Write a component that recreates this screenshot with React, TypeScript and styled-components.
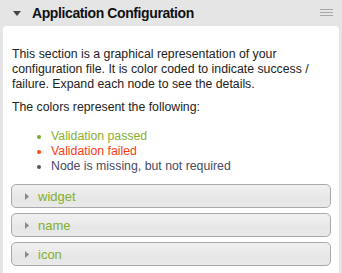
import React from "react";
import styled, { createGlobalStyle } from "styled-components";

const Global = createGlobalStyle`
  html, body { margin: 0; padding: 0; background: #e5e5e5; }
  body { font-family: "Liberation Sans", Arial, sans-serif; }
`;

const Page = styled.div`
  width: 342px;
  height: 273px;
  background: #e5e5e5;
  display: flex;
  flex-direction: column;
  overflow: hidden;
`;

const Header = styled.div`
  height: 26px;
  flex-shrink: 0;
  display: flex;
  align-items: center;
  padding: 0 9px 0 13px;
  box-sizing: border-box;
`;

const Title = styled.div`
  flex: 1;
  margin-left: 11px;
  font-size: 14px;
  letter-spacing: -0.4px;
  font-weight: bold;
  color: #111;
  padding-bottom: 1px;
`;

const Panel = styled.div`
  flex: 1;
  margin: 0 3px;
  background: #fff;
  border-radius: 4px 4px 0 0;
  padding: 21px 9px 0 9px;
  box-sizing: border-box;
`;

const Para = styled.p<{ $mb: number }>`
  margin: 0 0 ${(p) => p.$mb}px 0;
  font-size: 12.3px;
  line-height: 14.8px;
  color: #222;
`;

const List = styled.ul`
  margin: 0 0 10px 0;
  padding: 0 0 0 25px;
  list-style: none;
`;

const Item = styled.li<{ $c: string; $dot: string }>`
  font-size: 12.3px;
  line-height: 15px;
  color: ${(p) => p.$c};
  display: flex;
  align-items: center;
  &::before {
    content: "";
    width: 4px;
    height: 4px;
    border-radius: 50%;
    background: ${(p) => p.$dot};
    margin-right: 10px;
  }
`;

const Rows = styled.div`
  display: flex;
  flex-direction: column;
  gap: 5px;
  margin-left: -1px;
  margin-right: -1px;
`;

const Row = styled.div`
  height: 24px;
  box-sizing: border-box;
  border: 1px solid #a9a9a9;
  border-radius: 5px;
  background: linear-gradient(#f0f0f0 0%, #ebebeb 40%, #e6e6e6 60%, #e9e9e9 100%);
  display: flex;
  align-items: center;
  padding-left: 13px;
  font-size: 13px;
  color: #84b02a;
`;

const Arrow = styled.svg`
  margin-right: 9px;
`;

const Menu = () => (
  <svg width="13" height="8" viewBox="0 0 13 8">
    <rect x="0" y="0" width="13" height="1" fill="#a8a8a8" />
    <rect x="0" y="3" width="13" height="1" fill="#a8a8a8" />
    <rect x="0" y="6" width="13" height="1" fill="#a8a8a8" />
  </svg>
);

export default function App() {
  return (
    <Page>
      <Global />
      <Header>
        <svg width="8" height="5" viewBox="0 0 8 5">
          <polygon points="0,0 8,0 4,5" fill="#444" />
        </svg>
        <Title>Application Configuration</Title>
        <Menu />
      </Header>
      <Panel>
        <Para $mb={9}>
          This section is a graphical representation of your configuration file. It is color coded to indicate success /
          failure. Expand each node to see the details.
        </Para>
        <Para $mb={14}>The colors represent the following:</Para>
        <List>
          <Item $c="#8ab030" $dot="#7fa82c">Validation passed</Item>
          <Item $c="#ff3b14" $dot="#ff4a10">Validation failed</Item>
          <Item $c="#4a4a62" $dot="#555">Node is missing, but not required</Item>
        </List>
        <Rows>
          {["widget", "name", "icon"].map((n) => (
            <Row key={n}>
              <Arrow width="4" height="7" viewBox="0 0 4 7">
                <polygon points="0,0 4,3.5 0,7" fill="#8a8a8a" />
              </Arrow>
              {n}
            </Row>
          ))}
        </Rows>
      </Panel>
    </Page>
  );
}
